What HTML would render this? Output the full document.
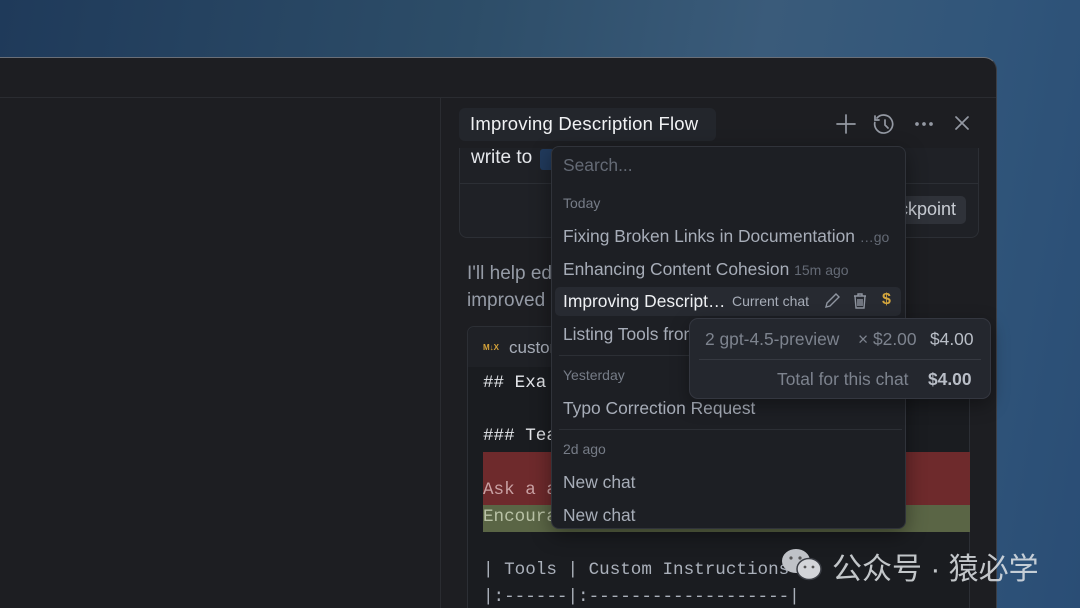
<!DOCTYPE html>
<html><head><meta charset="utf-8"><style>
*{margin:0;padding:0;box-sizing:border-box}
html,body{width:1080px;height:608px;overflow:hidden}
body{position:relative;font-family:"Liberation Sans","DejaVu Sans",sans-serif;background:linear-gradient(100deg,#1f3a5a 0%,#2d4d68 40%,#3a5b7a 65%,#30557a 85%,#2a4d75 100%)}
.a{position:absolute}
.win{left:0;top:57px;width:997px;height:551px;background:#1d1e22;border-top:1.5px solid #6a6f78;border-right:1px solid #3b3e45;border-top-right-radius:13px;overflow:hidden}
.t{position:absolute;white-space:nowrap}
.mono{font-family:"Liberation Mono","DejaVu Sans Mono",monospace;font-size:17.6px}
.it{font-size:17.4px;color:#a7adb8}
.hd{font-size:14px;color:#767c87}
</style></head><body>
<div class="a win"></div>
<div class="a" style="left:0;top:97px;width:996px;height:1px;background:#2a2c31"></div>
<div class="a" style="left:440px;top:98px;width:1px;height:510px;background:#2a2c31"></div>

<div class="a" style="left:459px;top:110px;width:520px;height:128px;background:#1f2126;border:1px solid #2c2f35;border-radius:8px"></div>
<div class="a" style="left:441px;top:98px;width:555px;height:50px;background:#1d1e22"></div>
<div class="a" style="left:460px;top:183px;width:518px;height:1px;background:#2c2f35"></div>
<div class="t" style="left:471px;top:147px;font-size:19px;color:#e6e8ec">write to</div>
<div class="a" style="left:540px;top:149px;width:14px;height:21px;background:#213a5c;border-radius:3px"></div>
<div class="a" style="left:860px;top:196px;width:106px;height:28px;background:#2f3239;border-radius:5px"></div>
<div class="t" style="left:866px;top:199px;font-size:18px;color:#c9cdd4">Checkpoint</div>

<div class="t" style="left:467px;top:260px;font-size:19px;color:#959ba6;line-height:27px">I'll help edit<br>improved</div>

<div class="a" style="left:467px;top:326px;width:503px;height:300px;background:#1a1c20;border:1px solid #2c2f35;border-radius:7px"></div>
<div class="a" style="left:468px;top:327px;width:501px;height:40px;background:#1f2126;border-radius:7px 7px 0 0"></div>
<div class="t" style="left:483px;top:343px;font-size:8px;color:#d7a43a;font-weight:bold">M↓X</div>
<div class="t" style="left:509px;top:338px;font-size:17px;color:#a7adb8">custom</div>
<div class="a" style="left:483px;top:452px;width:487px;height:53px;background:#6e2a2c"></div>
<div class="a" style="left:483px;top:505px;width:487px;height:27px;background:#5a6545"></div>
<div class="t mono" style="left:483px;top:373px;color:#e4e6ea">## Exa</div>
<div class="t mono" style="left:483px;top:426px;color:#e4e6ea">### Tea</div>
<div class="t mono" style="left:483px;top:480px;color:#c9a1a3">Ask a                              atical</div>
<div class="t mono" style="left:483px;top:507px;color:#b9c2a6">Encoura                           equent</div>
<div class="t mono" style="left:483px;top:560px;color:#aab0ba">| Tools | Custom Instructions |</div>
<div class="t mono" style="left:483px;top:587px;color:#aab0ba">|:------|:-------------------|</div>

<div class="a" style="left:459px;top:108px;width:257px;height:33px;background:#23262c;border-radius:6px"></div>
<div class="t" style="left:470px;top:113px;font-size:18.5px;color:#f1f2f4;letter-spacing:0.2px">Improving Description Flow</div>
<svg class="a" style="left:834px;top:112px" width="140" height="24" viewBox="0 0 140 24" fill="none" stroke="#9499a3" stroke-width="1.7" stroke-linecap="round">
<path d="M12 3v18M3 12h18"/>
<path d="M43 6a9 9 0 1 1-2.2 4.5M41 4v4h4M51 8v5l3 3"/>
<circle cx="83" cy="12" r="1" fill="#9499a3"/><circle cx="90" cy="12" r="1" fill="#9499a3"/><circle cx="97" cy="12" r="1" fill="#9499a3"/>
<path d="M122 5l12 12M134 5l-12 12"/>
</svg>

<div class="a" style="left:551px;top:146px;width:355px;height:383px;background:#1d1f24;border:1px solid #30333a;border-radius:8px;box-shadow:0 6px 20px rgba(0,0,0,.4)"></div>
<div class="t" style="left:563px;top:155px;font-size:17.4px;color:#646a75">Search...</div>
<div class="t hd" style="left:563px;top:195px">Today</div>
<div class="t it" style="left:563px;top:226px">Fixing Broken Links in Documentation <span style="font-size:14px;color:#646a75">…go</span></div>
<div class="t it" style="left:563px;top:259px">Enhancing Content Cohesion <span style="font-size:14px;color:#646a75">15m ago</span></div>
<div class="a" style="left:555px;top:287px;width:346px;height:29px;background:#272a31;border-radius:5px"></div>
<div class="t" style="left:563px;top:291px;font-size:17.4px;color:#eef0f3">Improving Descript…</div>
<div class="t" style="left:732px;top:293px;font-size:14px;color:#a7adb8">Current chat</div>
<svg class="a" style="left:823px;top:292px" width="72" height="18" viewBox="0 0 72 18" fill="none" stroke="#8f95a0" stroke-width="1.4">
<path d="M3 15l1-4 9-9 3 3-9 9z"/>
<path d="M31 4h12M35 4V2h4v2M32 4l1 12h8l1-12M35 7v7M37 7v7M39 7v7"/>
</svg>
<div class="t" style="left:882px;top:291px;font-size:16px;color:#d4a63d;font-weight:bold">$</div>
<div class="t it" style="left:563px;top:324px">Listing Tools from</div>
<div class="a" style="left:559px;top:355px;width:343px;height:1px;background:#2c2f35"></div>
<div class="t hd" style="left:563px;top:367px">Yesterday</div>
<div class="t it" style="left:563px;top:398px">Typo Correction Request</div>
<div class="a" style="left:559px;top:429px;width:343px;height:1px;background:#2c2f35"></div>
<div class="t hd" style="left:563px;top:441px">2d ago</div>
<div class="t it" style="left:563px;top:472px">New chat</div>
<div class="t it" style="left:563px;top:505px">New chat</div>

<div class="a" style="left:689px;top:318px;width:302px;height:81px;background:#24272e;border:1px solid #343740;border-radius:9px;box-shadow:0 6px 18px rgba(0,0,0,.35)"></div>
<div class="t" style="left:705px;top:329px;font-size:17.4px;color:#7d838e">2 gpt-4.5-preview</div>
<div class="t" style="left:858px;top:329px;font-size:17.4px;color:#7d838e">× $2.00</div>
<div class="t" style="left:930px;top:329px;font-size:17.4px;color:#b9bec7">$4.00</div>
<div class="a" style="left:699px;top:359px;width:282px;height:1px;background:#363941"></div>
<div class="t" style="left:777px;top:369px;font-size:17.4px;color:#7d838e">Total for this chat</div>
<div class="t" style="left:928px;top:369px;font-size:17.4px;color:#b9bec7;font-weight:bold">$4.00</div>

<svg class="a" style="left:780px;top:546px" width="44" height="36" viewBox="0 0 44 36"><ellipse cx="16" cy="15" rx="14" ry="12" fill="#bfc2c7"/><ellipse cx="29" cy="23" rx="12" ry="10.5" fill="#d3d5d9" stroke="#3a3d44" stroke-width="1.5"/><circle cx="11" cy="12" r="1.6" fill="#555"/><circle cx="20" cy="12" r="1.6" fill="#555"/><circle cx="25" cy="21" r="1.4" fill="#555"/><circle cx="33" cy="21" r="1.4" fill="#555"/></svg>
<div class="t" style="left:832px;top:544px;font-size:30px;color:rgba(225,228,232,.85);font-family:'Liberation Sans','Noto Sans CJK SC',sans-serif">公众号 · 猿必学</div>
</body></html>
